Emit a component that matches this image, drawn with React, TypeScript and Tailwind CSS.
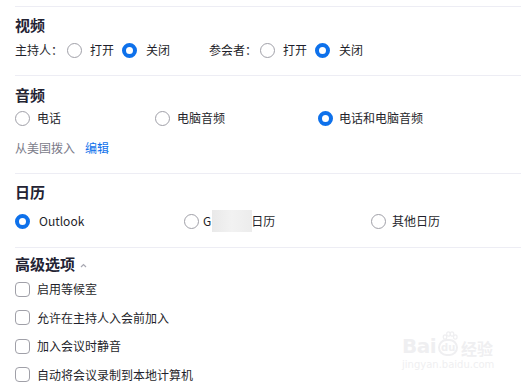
import React from "react";

const FONT = { fontFamily: '"Microsoft YaHei", "Noto Sans CJK SC", "Noto Sans", sans-serif' };

function Radio({ checked }: { checked?: boolean }) {
  return checked ? (
    <span className="inline-block w-[15px] h-[15px] rounded-full border-[4px] border-[#0e71eb] bg-white shrink-0" />
  ) : (
    <span className="inline-block w-[15px] h-[15px] rounded-full border border-[#a0a0a8] bg-white shrink-0" />
  );
}

function Option({ checked, label, gap = "ml-[7px]" }: { checked?: boolean; label: React.ReactNode; gap?: string }) {
  return (
    <span className="flex items-center">
      <Radio checked={checked} />
      <span className={`${gap} flex items-center`}>{label}</span>
    </span>
  );
}

function Check({ label }: { label: string }) {
  return (
    <div className="flex items-center h-[28.5px]">
      <span className="inline-block w-[15px] h-[15px] rounded-[4px] border border-[#a0a0a8] bg-white shrink-0" />
      <span className="ml-[7px]">{label}</span>
    </div>
  );
}

function Divider() {
  return <div className="h-px w-[506px] bg-[#ededf4]" />;
}

function Title({ children }: { children: React.ReactNode }) {
  return <div className="h-5 leading-5 text-[15px] font-bold text-[#232333] flex items-center">{children}</div>;
}

export default function App() {
  return (
    <div className="relative w-[525px] h-[391px] bg-white overflow-hidden text-[12px] text-[#1f1f2b]" style={FONT}>
      <div className="pl-[15px] pt-[6px]">
        <Divider />

        {/* 视频 */}
        <div className="pt-[8px] pb-[15px]">
          <Title>视频</Title>
          <div className="mt-[5px] h-5 flex items-center">
            <div className="w-[194px] flex items-center">
              <span className="w-[52px]">主持人：</span>
              <Option label="打开" gap="ml-[8px]" />
              <span className="ml-[8px]">
                <Option checked label="关闭" gap="ml-[9px]" />
              </span>
            </div>
            <div className="flex items-center">
              <span className="w-[51px]">参会者：</span>
              <Option label="打开" gap="ml-[8px]" />
              <span className="ml-[8px]">
                <Option checked label="关闭" gap="ml-[9px]" />
              </span>
            </div>
          </div>
        </div>
        <Divider />

        {/* 音频 */}
        <div className="pt-[9px] pb-[15px]">
          <Title>音频</Title>
          <div className="mt-[3px] h-5 flex items-center">
            <div className="w-[140px]"><Option label="电话" /></div>
            <div className="w-[163px]"><Option label="电脑音频" /></div>
            <Option checked label="电话和电脑音频" gap="ml-[6px]" />
          </div>
          <div className="mt-[10px] h-5 flex items-center">
            <span className="text-[#7c7c8a]">从美国拨入</span>
            <span className="ml-[10px] text-[#0e71eb]">编辑</span>
          </div>
        </div>
        <Divider />

        {/* 日历 */}
        <div className="pt-[8px] pb-[16px]">
          <Title>日历</Title>
          <div className="mt-[9px] h-5 flex items-center">
            <div className="w-[169px]"><Option checked label="Outlook" gap="ml-[9px]" /></div>
            <div className="w-[187px]">
              <Option
                gap="ml-[4px]"
                label={
                  <>
                    <span>G</span>
                    <span className="inline-block ml-px w-[40px] h-[22px] bg-gradient-to-r from-[#e9e9e9] via-[#f2f2f2] to-[#ececec]" />
                    <span className="-ml-px">日历</span>
                  </>
                }
              />
            </div>
            <Option label="其他日历" gap="ml-[6px]" />
          </div>
        </div>
        <Divider />

        {/* 高级选项 */}
        <div className="pt-[6px]">
          <Title>
            高级选项
            <svg className="ml-[5px] mt-[3px]" width="7" height="5" viewBox="0 0 7 5" fill="none">
              <path d="M1 4l2.5-2.5L6 4" stroke="#a8a8b2" strokeWidth="1.2" />
            </svg>
          </Title>
          <div className="mt-px">
            <Check label="启用等候室" />
            <Check label="允许在主持人入会前加入" />
            <Check label="加入会议时静音" />
            <Check label="自动将会议录制到本地计算机" />
          </div>
        </div>
      </div>

      {/* watermark */}
      <div className="absolute left-[402px] top-[336px] text-[#efeff1] pointer-events-none select-none" style={{ fontFamily: '"DejaVu Sans", sans-serif' }}>
        <div className="flex items-end leading-none">
          <span className="text-[20px] font-bold tracking-tight">Bai</span>
          <span className="relative ml-[2px] inline-flex items-center justify-center w-[20px] h-[17px] rounded-full border-2 border-[#efeff1] text-[10px] font-bold">
            du
            <svg className="absolute -top-[10px] left-[2px]" width="16" height="10" viewBox="0 0 16 10" fill="none" stroke="#efeff1" strokeWidth="1.2">
              <ellipse cx="3" cy="6" rx="1.8" ry="2.2" />
              <ellipse cx="6.5" cy="3" rx="1.8" ry="2.2" />
              <ellipse cx="10" cy="3" rx="1.8" ry="2.2" />
              <ellipse cx="13.3" cy="6" rx="1.8" ry="2.2" />
            </svg>
          </span>
          <span className="ml-[3px] text-[16px] font-bold" style={FONT}>经验</span>
        </div>
        <div className="mt-[4px] text-[10px] leading-none">jingyan.baidu.com</div>
      </div>
    </div>
  );
}
